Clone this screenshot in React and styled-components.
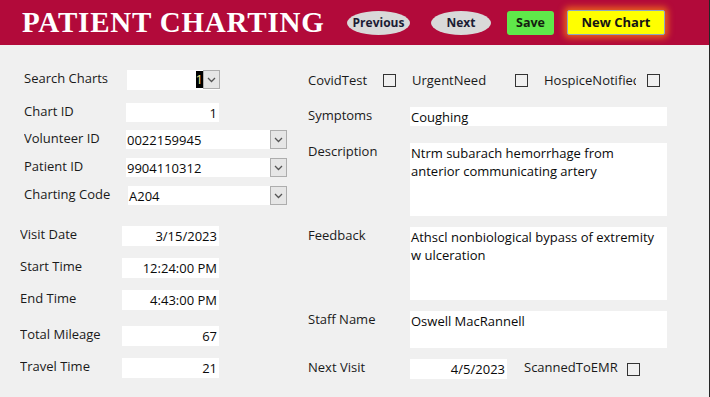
import React from 'react'
import styled, { createGlobalStyle } from 'styled-components'

const GlobalStyle = createGlobalStyle`
  html, body { margin: 0; padding: 0; }
  body {
    background: #f0f0f0;
    font-family: "Open Sans", "Noto Sans", sans-serif;
  }
`

const Page = styled.div`
  width: 710px;
  height: 397px;
  box-sizing: border-box;
  border-right: 1px solid #262626;
  background: #f0f0f0;
  overflow: hidden;
`

const Header = styled.div`
  height: 45px;
  background: #b20a3a;
  display: flex;
  align-items: center;
  padding-left: 22px;
`

const Title = styled.h1`
  margin: 0;
  width: 325px;
  color: #ffffff;
  font-family: "Liberation Serif", serif;
  font-weight: bold;
  font-size: 29px;
  letter-spacing: 0.8px;
  white-space: nowrap;
`

const Pill = styled.button`
  all: unset;
  box-sizing: border-box;
  height: 24px;
  width: ${(props) => props.w}px;
  margin-left: ${(props) => props.ml}px;
  border-radius: 50%;
  background: #d9d9d9;
  color: #1c1c34;
  font-family: "Open Sans", sans-serif;
  font-weight: bold;
  font-size: 12px;
  text-align: center;
  line-height: 24px;
`

const SaveButton = styled.button`
  all: unset;
  box-sizing: border-box;
  width: 47px;
  height: 24px;
  margin-left: 16px;
  border-radius: 3px;
  background: #5fe84a;
  color: #14210f;
  font-family: "Open Sans", sans-serif;
  font-weight: bold;
  font-size: 12.5px;
  text-align: center;
  line-height: 24px;
`

const NewButton = styled.button`
  all: unset;
  box-sizing: border-box;
  width: 98px;
  height: 25px;
  margin-left: 13px;
  background: #ffff00;
  border: 1px solid #8ea6c2;
  border-radius: 2px;
  box-shadow: 0 0 6px 3px #e8601c;
  color: #141414;
  font-family: "Open Sans", sans-serif;
  font-weight: bold;
  font-size: 13px;
  text-align: center;
  line-height: 23px;
`

const Body = styled.div`
  display: flex;
`

const LeftCol = styled.div`
  width: 308px;
  display: flex;
  flex-direction: column;
`

const Group = styled.div`
  display: flex;
  flex-direction: column;
  padding-left: ${(props) => props.pl}px;
  padding-top: ${(props) => props.pt}px;
`

const Row = styled.div`
  display: flex;
  align-items: flex-start;
  margin-top: ${(props) => props.mt || 0}px;
`

const Label = styled.div`
  width: ${(props) => props.w}px;
  margin-left: ${(props) => props.ml || 0}px;
  flex: none;
  font-size: 13px;
  color: #1a1a1a;
  line-height: 18px;
  margin-top: -1px;
  white-space: nowrap;
  overflow: hidden;
`

const Field = styled.div`
  box-sizing: border-box;
  width: ${(props) => props.w}px;
  height: ${(props) => props.h || 20}px;
  margin-left: ${(props) => props.ml || 0}px;
  background: #ffffff;
  font-size: 13px;
  color: #0a0a0a;
  line-height: 18px;
  padding: 1px 2px 0 1px;
  text-align: ${(props) => (props.right ? 'right' : 'left')};
  display: flex;
  align-items: flex-start;
  justify-content: ${(props) => (props.right ? 'flex-end' : 'space-between')};
`

const Selected = styled.span`
  background: #000;
  color: #f5e28a;
  line-height: 17px;
`

const Drop = styled.div`
  box-sizing: border-box;
  width: 17px;
  height: 19px;
  margin: -1px -2px 0 0;
  background: #e6e6e6;
  border: 1px solid #adadad;
  display: flex;
  align-items: center;
  justify-content: center;
  flex: none;
`

const CheckRow = styled.div`
  display: flex;
  align-items: center;
  padding-top: 29px;
  height: 13px;
`

const Check = styled.div`
  box-sizing: border-box;
  width: 13px;
  height: 13px;
  border: 1.5px solid #333;
  background: transparent;
  margin-left: ${(props) => props.ml || 0}px;
  margin-right: ${(props) => props.mr || 0}px;
  margin-top: ${(props) => props.mt || 0}px;
  flex: none;
`

const RightCol = styled.div`
  display: flex;
  flex-direction: column;
`

const Chevron = () => (
  <svg width="9" height="6" viewBox="0 0 9 6">
    <path d="M1 1 L4.5 4.5 L8 1" fill="none" stroke="#555" strokeWidth="1.3" />
  </svg>
)

const App = () => {
  return (
    <Page>
      <GlobalStyle />
      <Header>
        <Title>PATIENT CHARTING</Title>
        <Pill w={63} ml={0}>Previous</Pill>
        <Pill w={60} ml={21}>Next</Pill>
        <SaveButton>Save</SaveButton>
        <NewButton>New Chart</NewButton>
      </Header>
      <Body>
        <LeftCol>
          <Group pl={24} pt={25}>
            <Row>
              <Label w={103}>Search Charts</Label>
              <Field w={93} right>
                <Selected>1</Selected>
                <Drop><Chevron /></Drop>
              </Field>
            </Row>
            <Row mt={13}>
              <Label w={102}>Chart ID</Label>
              <Field w={93} h={19} right>1</Field>
            </Row>
            <Row mt={8}>
              <Label w={102}>Volunteer ID</Label>
              <Field w={161} h={19}>
                <span>0022159945</span>
                <Drop><Chevron /></Drop>
              </Field>
            </Row>
            <Row mt={9}>
              <Label w={102}>Patient ID</Label>
              <Field w={161} h={19}>
                <span>9904110312</span>
                <Drop><Chevron /></Drop>
              </Field>
            </Row>
            <Row mt={9}>
              <Label w={102}>Charting Code</Label>
              <Field w={159} h={19} ml={2}>
                <span>A204</span>
                <Drop><Chevron /></Drop>
              </Field>
            </Row>
          </Group>
          <Group pl={20} pt={21}>
            <Row>
              <Label w={102}>Visit Date</Label>
              <Field w={97} right>3/15/2023</Field>
            </Row>
            <Row mt={12}>
              <Label w={102}>Start Time</Label>
              <Field w={97} right>12:24:00 PM</Field>
            </Row>
            <Row mt={12}>
              <Label w={102}>End Time</Label>
              <Field w={97} right>4:43:00 PM</Field>
            </Row>
            <Row mt={16}>
              <Label w={102}>Total Mileage</Label>
              <Field w={97} right>67</Field>
            </Row>
            <Row mt={12}>
              <Label w={102}>Travel Time</Label>
              <Field w={97} right>21</Field>
            </Row>
          </Group>
        </LeftCol>
        <RightCol>
          <CheckRow>
            <Label w={75}>CovidTest</Label>
            <Check mr={16} />
            <Label w={103}>UrgentNeed</Label>
            <Check mr={16} />
            <Label w={92}>HospiceNotified</Label>
            <Check ml={11} />
          </CheckRow>
          <Row mt={20}>
            <Label w={102}>Symptoms</Label>
            <Field w={257} h={19}>Coughing</Field>
          </Row>
          <Row mt={17}>
            <Label w={102}>Description</Label>
            <Field w={257} h={73}>Ntrm subarach hemorrhage from anterior communicating artery</Field>
          </Row>
          <Row mt={11}>
            <Label w={102}>Feedback</Label>
            <Field w={257} h={73}>Athscl nonbiological bypass of extremity w ulceration</Field>
          </Row>
          <Row mt={11}>
            <Label w={102}>Staff Name</Label>
            <Field w={257} h={37}>Oswell MacRannell</Field>
          </Row>
          <Row mt={11}>
            <Label w={102}>Next Visit</Label>
            <Field w={97} right>4/5/2023</Field>
            <Label w={103} ml={17}>ScannedToEMR</Label>
            <Check mt={4} />
          </Row>
        </RightCol>
      </Body>
    </Page>
  )
}

export default App
